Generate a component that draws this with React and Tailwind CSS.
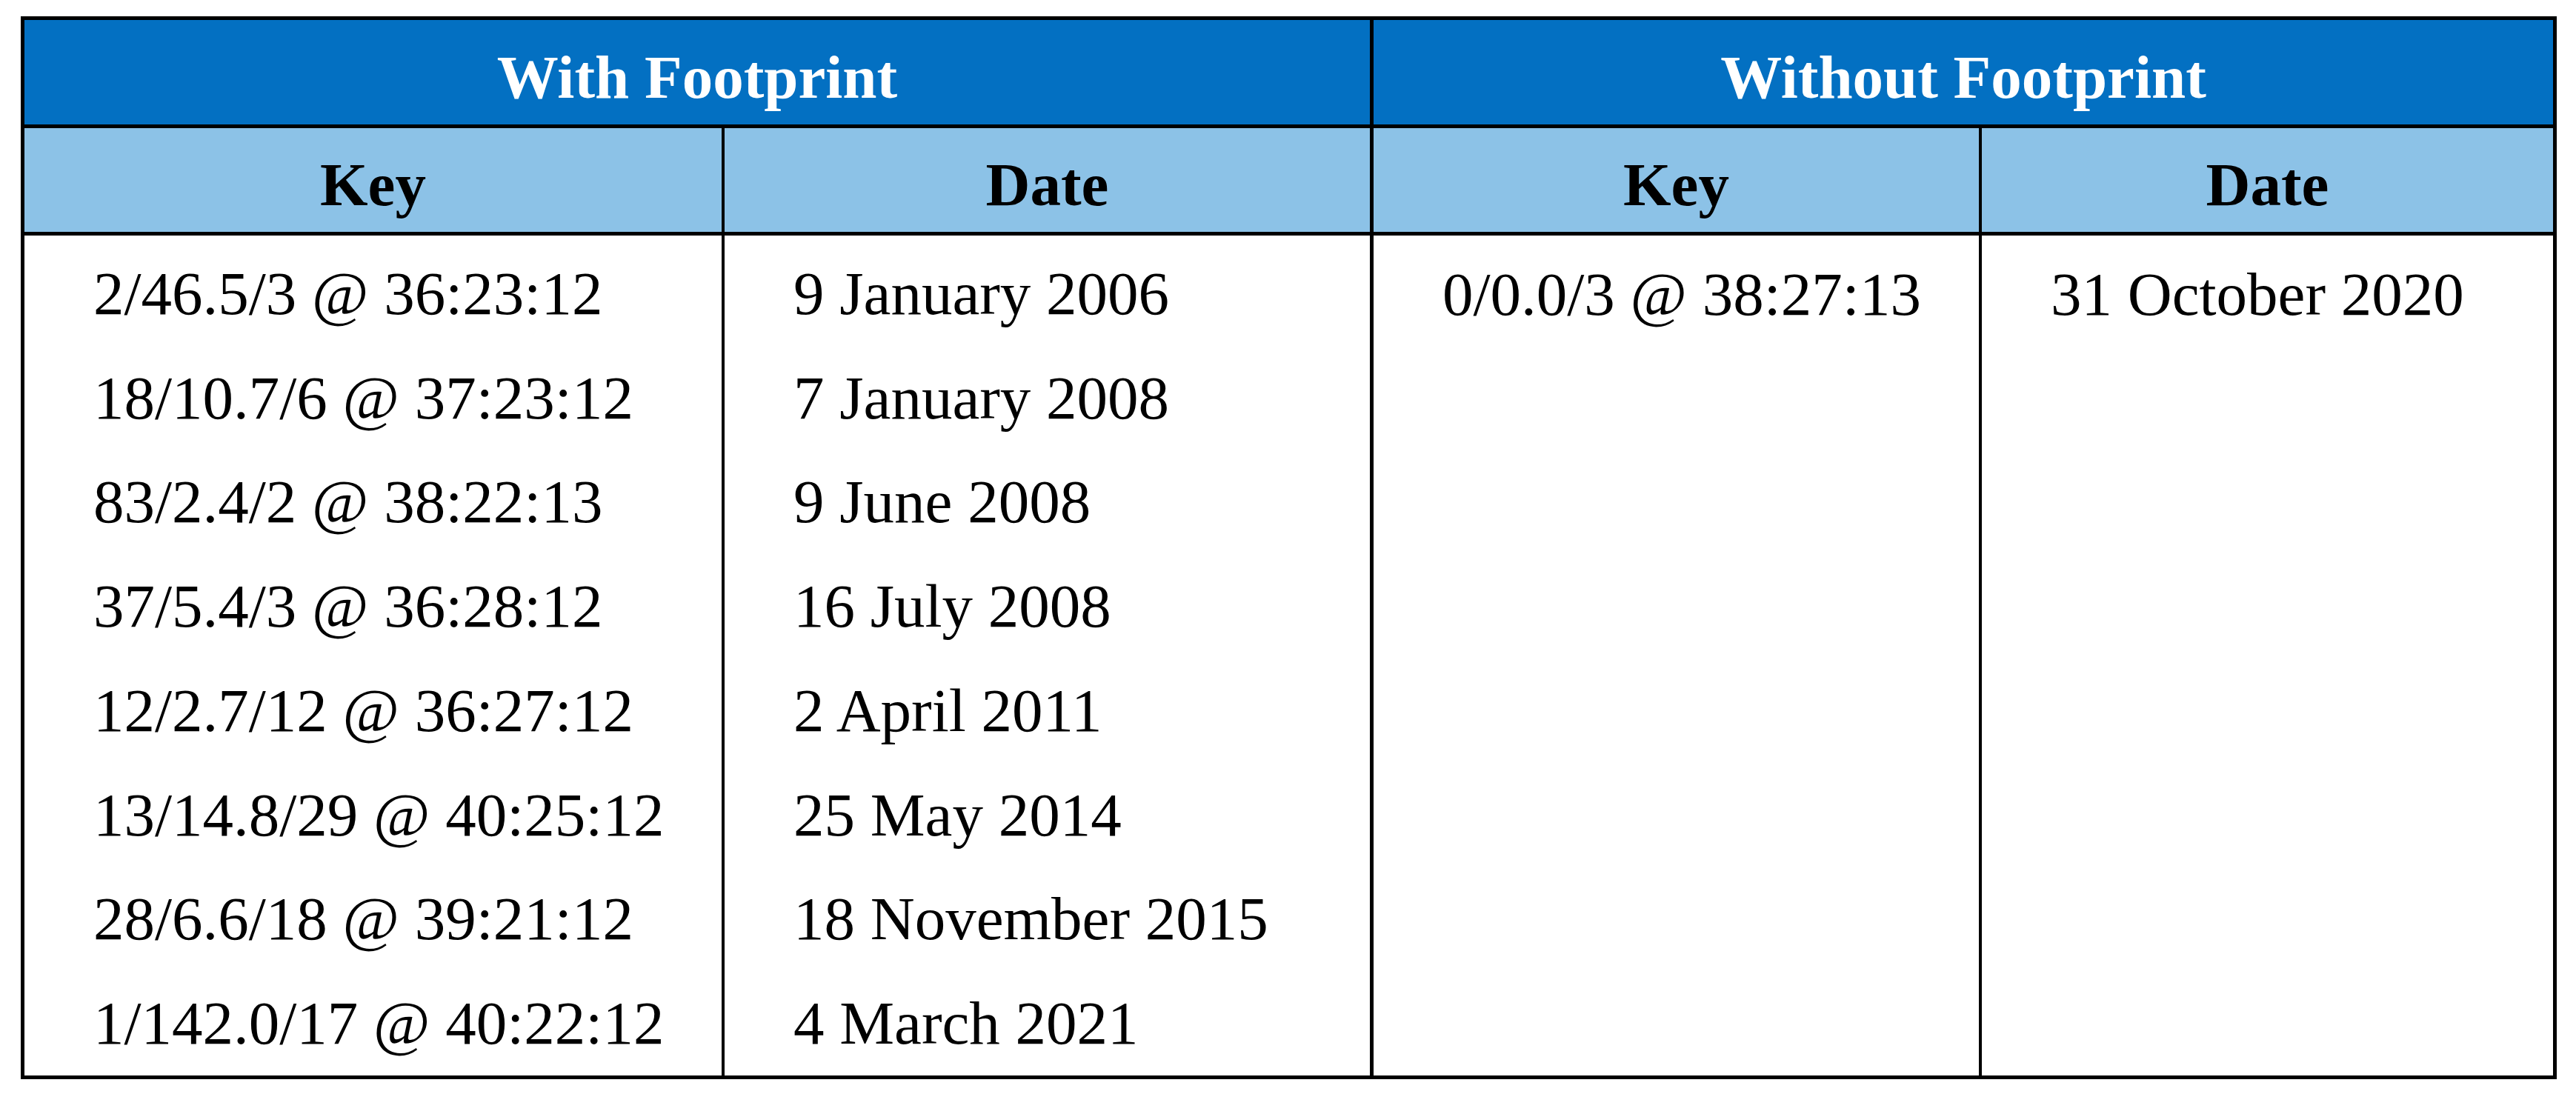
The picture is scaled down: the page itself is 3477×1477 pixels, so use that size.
const withFootprint = [
  { key: "2/46.5/3 @ 36:23:12", date: "9 January 2006" },
  { key: "18/10.7/6 @ 37:23:12", date: "7 January 2008" },
  { key: "83/2.4/2 @ 38:22:13", date: "9 June 2008" },
  { key: "37/5.4/3 @ 36:28:12", date: "16 July 2008" },
  { key: "12/2.7/12 @ 36:27:12", date: "2 April 2011" },
  { key: "13/14.8/29 @ 40:25:12", date: "25 May 2014" },
  { key: "28/6.6/18 @ 39:21:12", date: "18 November 2015" },
  { key: "1/142.0/17 @ 40:22:12", date: "4 March 2021" },
];

const withoutFootprint = [{ key: "0/0.0/3 @ 38:27:13", date: "31 October 2020" }];

function Column({ items, className }) {
  return (
    <div className={`flex flex-col pt-[8px] ${className}`}>
      {items.map((text, i) => (
        <div key={i} className="h-[142px] flex items-center pl-[93px] whitespace-nowrap">
          {text}
        </div>
      ))}
    </div>
  );
}

export default function App() {
  return (
    <div className="min-h-screen bg-white pl-[28px] pt-[22px]">
      <div className="w-[3423px] border-[5px] border-black text-[83px] leading-none text-black font-['Liberation_Serif',serif]">
        {/* ---------- group header ---------- */}
        <div className="flex h-[146px] bg-[#0370c2] border-b-[5px] border-black text-white font-bold">
          <div className="w-[1821px] border-r-[5px] border-black flex items-center justify-center pt-[13px]">
            With Footprint
          </div>
          <div className="flex-1 flex items-center justify-center pt-[13px]">Without Footprint</div>
        </div>

        {/* ---------- column header ---------- */}
        <div className="flex h-[145px] bg-[#8cc2e7] border-b-[5px] border-black font-bold">
          <div className="w-[945px] border-r-[4px] border-black flex items-center justify-center pt-[12px]">
            Key
          </div>
          <div className="w-[876px] border-r-[5px] border-black flex items-center justify-center pt-[12px]">
            Date
          </div>
          <div className="w-[821px] border-r-[4px] border-black flex items-center justify-center pt-[12px]">
            Key
          </div>
          <div className="flex-1 flex items-center justify-center pt-[12px]">Date</div>
        </div>

        {/* ---------- body ---------- */}
        <div className="flex h-[1134px]">
          <Column
            items={withFootprint.map((r) => r.key)}
            className="w-[945px] border-r-[4px] border-black"
          />
          <Column
            items={withFootprint.map((r) => r.date)}
            className="w-[876px] border-r-[5px] border-black"
          />
          <Column
            items={withoutFootprint.map((r) => r.key)}
            className="w-[821px] border-r-[4px] border-black"
          />
          <Column items={withoutFootprint.map((r) => r.date)} className="flex-1" />
        </div>
      </div>
    </div>
  );
}
